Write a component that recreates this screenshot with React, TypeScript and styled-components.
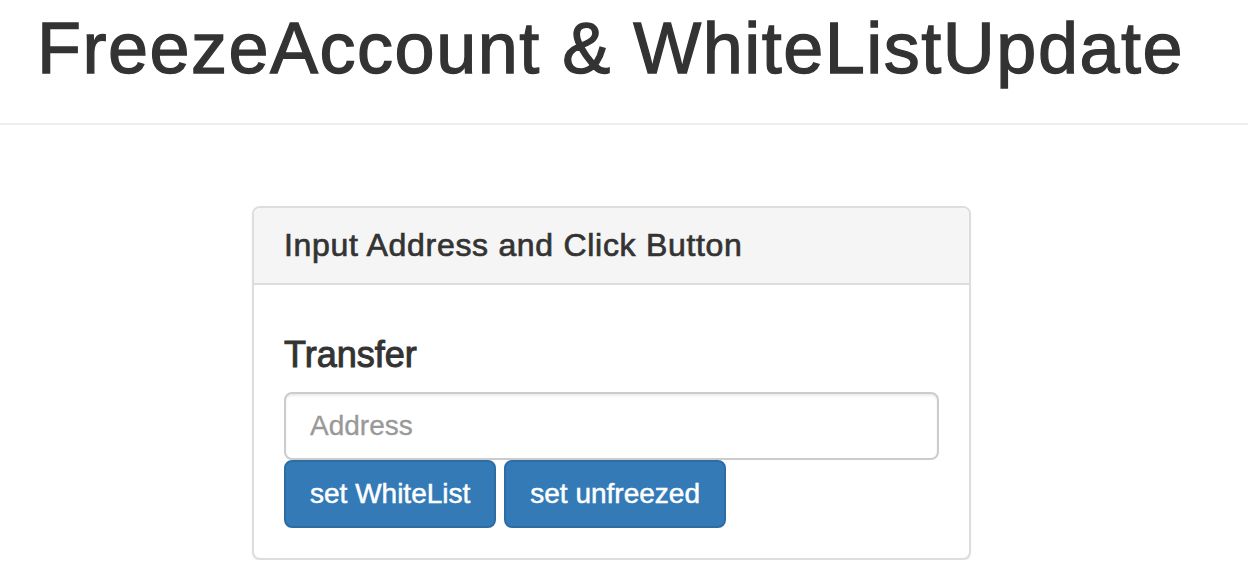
import React from "react";
import styled, { createGlobalStyle } from "styled-components";

const Global = createGlobalStyle`
  html, body {
    margin: 0;
    padding: 0;
    background: #fff;
  }
  body {
    font-family: "Liberation Sans", Arial, Helvetica, sans-serif;
    font-size: 28px;
    line-height: 1.42857;
    color: #333;
  }
  * { box-sizing: border-box; }
`;

const PageHeader = styled.header`
  padding: 9px 0 35px 37px;
  border-bottom: 2px solid #eee;
`;

const Title = styled.h1`
  margin: 0;
  font-size: 72px;
  line-height: 1.1;
  font-weight: 400;
  letter-spacing: 1.5px;
  -webkit-text-stroke: 1.3px #333;
  color: #333;
`;

const Main = styled.main`
  padding: 81px 0 0 252px;
`;

const Panel = styled.section`
  width: 719px;
  border: 2px solid #ddd;
  border-radius: 8px;
  background: #fff;
  box-shadow: 0 2px 2px rgba(0, 0, 0, 0.05);
  overflow: hidden;
`;

const PanelHeading = styled.div`
  background: #f5f5f5;
  border-bottom: 2px solid #ddd;
  padding: 20px 30px;
`;

const PanelTitle = styled.h3`
  margin: 0;
  font-size: 32px;
  line-height: 1.1;
  font-weight: 400;
  letter-spacing: 0.7px;
  -webkit-text-stroke: 0.7px #333;
  color: #333;
`;

const PanelBody = styled.div`
  padding: 30px;
`;

const SectionTitle = styled.h4`
  margin: 20px 0 17px;
  font-size: 36px;
  line-height: 1.1;
  font-weight: 400;
  -webkit-text-stroke: 1px #333;
  color: #333;
`;

const AddressInput = styled.input`
  display: block;
  width: 100%;
  height: 68px;
  padding: 12px 24px;
  font-family: inherit;
  font-size: 28px;
  line-height: 1.42857;
  color: #555;
  background: #fff;
  border: 2px solid #ccc;
  border-radius: 8px;
  box-shadow: inset 0 2px 2px rgba(0, 0, 0, 0.075);
  outline: none;
  -webkit-text-stroke: 0.3px currentColor;
  &::placeholder {
    color: #999;
  }
`;

const ButtonRow = styled.div`
  display: flex;
  gap: 8px;
`;

const PrimaryButton = styled.button`
  display: inline-block;
  padding: 12px 24px;
  font-family: inherit;
  font-size: 28px;
  line-height: 1.42857;
  font-weight: 400;
  color: #fff;
  background: #337ab7;
  border: 2px solid #2e6da4;
  border-radius: 8px;
  cursor: pointer;
  white-space: nowrap;
  -webkit-text-stroke: 0.5px #fff;
`;

export default function App() {
  return (
    <>
      <Global />
      <PageHeader>
        <Title>FreezeAccount &amp; WhiteListUpdate</Title>
      </PageHeader>
      <Main>
        <Panel>
          <PanelHeading>
            <PanelTitle>Input Address and Click Button</PanelTitle>
          </PanelHeading>
          <PanelBody>
            <SectionTitle>Transfer</SectionTitle>
            <AddressInput type="text" placeholder="Address" />
            <ButtonRow>
              <PrimaryButton type="button">set WhiteList</PrimaryButton>
              <PrimaryButton type="button">set unfreezed</PrimaryButton>
            </ButtonRow>
          </PanelBody>
        </Panel>
      </Main>
    </>
  );
}
